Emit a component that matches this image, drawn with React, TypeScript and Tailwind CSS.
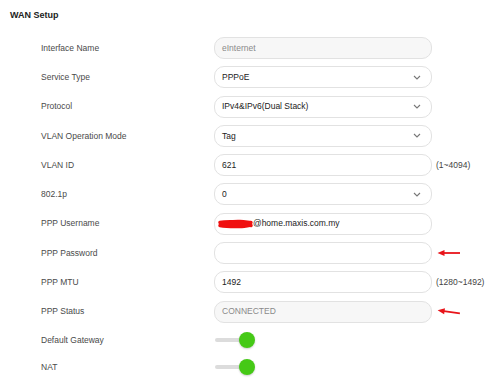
import React from "react";

const Chevron = () => (
  <svg width="8" height="5" viewBox="0 0 8 5" className="shrink-0">
    <path d="M1 1 L4 4 L7 1" fill="none" stroke="#777" strokeWidth="1.1" />
  </svg>
);

const Arrow = ({ tilt = 0 }: { tilt?: number }) => (
  <svg width="26" height="10" viewBox="0 0 26 10" className="ml-[1px]">
    <g transform={`rotate(${tilt} 13 5)`}>
      <line x1="5" y1="5" x2="23" y2="5" stroke="#e8141a" strokeWidth="1.8" />
      <polygon points="0.5,5 7.5,2 7.5,8" fill="#e8141a" />
    </g>
  </svg>
);

const Toggle = () => (
  <div className="relative h-[20px] w-[44px] flex items-center">
    <div className="ml-[1px] h-[4px] w-[32px] rounded-full bg-[#dcdcdc]" />
    <div className="absolute left-[25px] top-[2px] h-[16px] w-[16px] rounded-full bg-[#45c916] shadow-[0_1px_2px_rgba(0,0,0,0.2)]" />
  </div>
);

type Row = {
  label: string;
  kind: "input" | "select" | "disabled" | "toggle";
  value?: string;
  hint?: React.ReactNode;
  scribble?: boolean;
};

const rows: Row[] = [
  { label: "Interface Name", kind: "disabled", value: "eInternet" },
  { label: "Service Type", kind: "select", value: "PPPoE" },
  { label: "Protocol", kind: "select", value: "IPv4&IPv6(Dual Stack)" },
  { label: "VLAN Operation Mode", kind: "select", value: "Tag" },
  { label: "VLAN ID", kind: "input", value: "621", hint: "(1~4094)" },
  { label: "802.1p", kind: "select", value: "0" },
  { label: "PPP Username", kind: "input", value: "@home.maxis.com.my", scribble: true },
  { label: "PPP Password", kind: "input", value: "", hint: <Arrow /> },
  { label: "PPP MTU", kind: "input", value: "1492", hint: "(1280~1492)" },
  { label: "PPP Status", kind: "disabled", value: "CONNECTED", hint: <Arrow tilt={8} /> },
  { label: "Default Gateway", kind: "toggle" },
  { label: "NAT", kind: "toggle" },
];

export default function App() {
  return (
    <div
      className="w-[500px] h-[389px] bg-white overflow-hidden text-[8.5px]"
      style={{ fontFamily: '"Liberation Sans", Arial, sans-serif' }}
    >
      <div className="pl-[10px] pt-[9px] h-[37px] text-[9px] font-bold text-[#222]">WAN Setup</div>
      <div className="flex flex-col gap-y-[7.3px] pl-[41px]">
        {rows.map((r) => (
          <div key={r.label} className={`flex items-center ${r.kind === "toggle" ? "h-[20px]" : "h-[22px]"}`}>
            <div className="w-[173px] text-[#4a4a4a]">{r.label}</div>
            {r.kind === "toggle" ? (
              <Toggle />
            ) : (
              <div
                className={`w-[218px] h-[22px] rounded-[10px] border border-[#e2e2e2] flex items-center pl-[7px] pr-[10px] ${
                  r.kind === "disabled" ? "bg-[#f7f7f7] text-[#8a8a8a]" : "bg-white text-[#222]"
                }`}
              >
                {r.scribble && (
                  <svg width="35" height="10" viewBox="0 0 35 10" className="shrink-0 -ml-[4px]">
                    <path
                      d="M2 3.5 C8 2 14 3 20 2.5 C26 2 30 3.5 33 3.5 M2 6.5 C10 8 18 7.5 24 7.5 C28 7.5 31 6 33 6.5 M4 5 L31 5"
                      fill="none"
                      stroke="#f01010"
                      strokeWidth="3.4"
                      strokeLinecap="round"
                    />
                  </svg>
                )}
                <span className="flex-1 whitespace-nowrap">{r.value}</span>
                {r.kind === "select" && <Chevron />}
              </div>
            )}
            {r.hint && <div className="ml-[4px] text-[#444] flex items-center">{r.hint}</div>}
          </div>
        ))}
      </div>
    </div>
  );
}
